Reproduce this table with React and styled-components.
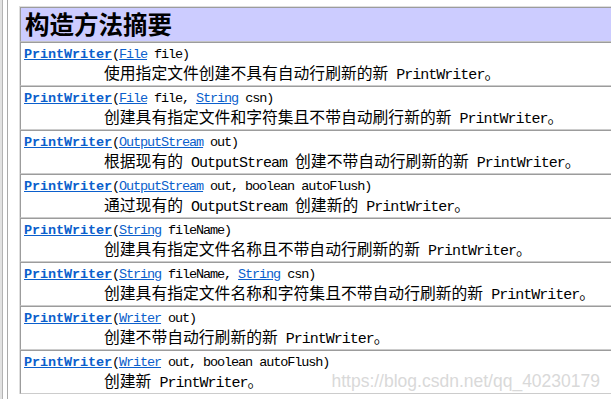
import React from "react";
import styled, { createGlobalStyle } from "styled-components";

const GlobalStyle = createGlobalStyle`
  html, body {
    margin: 0;
    padding: 0;
    background: #ffffff;
    overflow: hidden;
  }
`;

const Page = styled.div`
  position: relative;
  display: flex;
  height: 399px;
  overflow: hidden;
  background: #fff;
`;

const Gutter = styled.div`
  flex-shrink: 0;
  width: 8px;
  box-sizing: border-box;
  border-left: 2px solid #e2e2e2;
  border-right: 1px solid #a9a9a9;
  box-shadow: inset 1px 0 0 #b4b4b4;
`;

const Content = styled.div`
  padding: 6px 0 0 11px;
`;

const Summary = styled.div`
  width: 640px;
  border-top: 1px solid #dedede;
  border-left: 1px solid #dedede;
`;

const HeaderCell = styled.div`
  height: 30px;
  background: #ccccff;
  border-top: 1px solid #9c9c9c;
  border-left: 1px solid #9c9c9c;
  border-bottom: 1px solid #c4c4c4;
  padding: 1px 4px 2px;
  font-family: "Noto Sans CJK SC", sans-serif;
  font-weight: 700;
  font-size: 24.5px;
  line-height: 30px;
  color: #000;
`;

const Row = styled.div`
  border-top: 1px solid #9c9c9c;
  border-left: 1px solid #9c9c9c;
  border-bottom: 1px solid #cccccc;
  padding: 4px 3px 2px;
`;

const Signature = styled.div`
  height: 16px;
  font-family: "Liberation Mono", monospace;
  font-size: 13.5px;
  letter-spacing: -1.1px;
  line-height: 16px;
  color: #000;
  white-space: pre;
`;

const TypeLink = styled.a`
  color: #0b5fcc;
  text-decoration: underline;
  font-weight: ${(p) => (p.$bold ? 700 : 400)};
  letter-spacing: ${(p) => (p.$bold ? "-0.1px" : "-1.1px")};
`;

const Desc = styled.div`
  height: 20px;
  padding-left: 80px;
  font-family: "Noto Sans CJK SC", sans-serif;
  font-size: 15.8px;
  line-height: 20px;
  color: #000;
  white-space: pre;
`;

const Latin = styled.span`
  font-family: "Liberation Mono", monospace;
  font-size: 15px;
  line-height: 14px;
  letter-spacing: -1px;
`;

const Watermark = styled.div`
  position: absolute;
  right: 11px;
  bottom: 7px;
  font-family: "Liberation Sans", Arial, sans-serif;
  font-size: 17.5px;
  color: #d9d9d9;
  pointer-events: none;
`;

const constructors = [
  { params: [{ type: "File", name: "file" }], desc: "使用指定文件创建不具有自动行刷新的新 PrintWriter。" },
  {
    params: [{ type: "File", name: "file" }, { type: "String", name: "csn" }],
    desc: "创建具有指定文件和字符集且不带自动刷行新的新 PrintWriter。",
  },
  { params: [{ type: "OutputStream", name: "out" }], desc: "根据现有的 OutputStream 创建不带自动行刷新的新 PrintWriter。" },
  {
    params: [{ type: "OutputStream", name: "out" }, { type: "boolean", name: "autoFlush", plain: true }],
    desc: "通过现有的 OutputStream 创建新的 PrintWriter。",
  },
  { params: [{ type: "String", name: "fileName" }], desc: "创建具有指定文件名称且不带自动行刷新的新 PrintWriter。" },
  {
    params: [{ type: "String", name: "fileName" }, { type: "String", name: "csn" }],
    desc: "创建具有指定文件名称和字符集且不带自动行刷新的新 PrintWriter。",
  },
  { params: [{ type: "Writer", name: "out" }], desc: "创建不带自动行刷新的新 PrintWriter。" },
  {
    params: [{ type: "Writer", name: "out" }, { type: "boolean", name: "autoFlush", plain: true }],
    desc: "创建新 PrintWriter。",
  },
];

// wrap ascii runs so they get the half-width mono face
function mixed(text) {
  return text.split(/([\x20-\x7e]+)/).map((part, i) =>
    /^[\x20-\x7e]+$/.test(part) ? <Latin key={i}>{part}</Latin> : part
  );
}

function Constructor({ params, desc }) {
  return (
    <Row>
      <Signature>
        <TypeLink href="#" $bold>PrintWriter</TypeLink>(
        {params.map((p, i) => (
          <React.Fragment key={i}>
            {i > 0 && ", "}
            {p.plain ? p.type : <TypeLink href="#">{p.type}</TypeLink>} {p.name}
          </React.Fragment>
        ))}
        )
      </Signature>
      <Desc>{mixed(desc)}</Desc>
    </Row>
  );
}

export default function App() {
  return (
    <Page>
      <GlobalStyle />
      <Gutter />
      <Content>
        <Summary>
          <HeaderCell>构造方法摘要</HeaderCell>
          {constructors.map((c, i) => (
            <Constructor key={i} {...c} />
          ))}
        </Summary>
      </Content>
      <Watermark>https://blog.csdn.net/qq_40230179</Watermark>
    </Page>
  );
}
